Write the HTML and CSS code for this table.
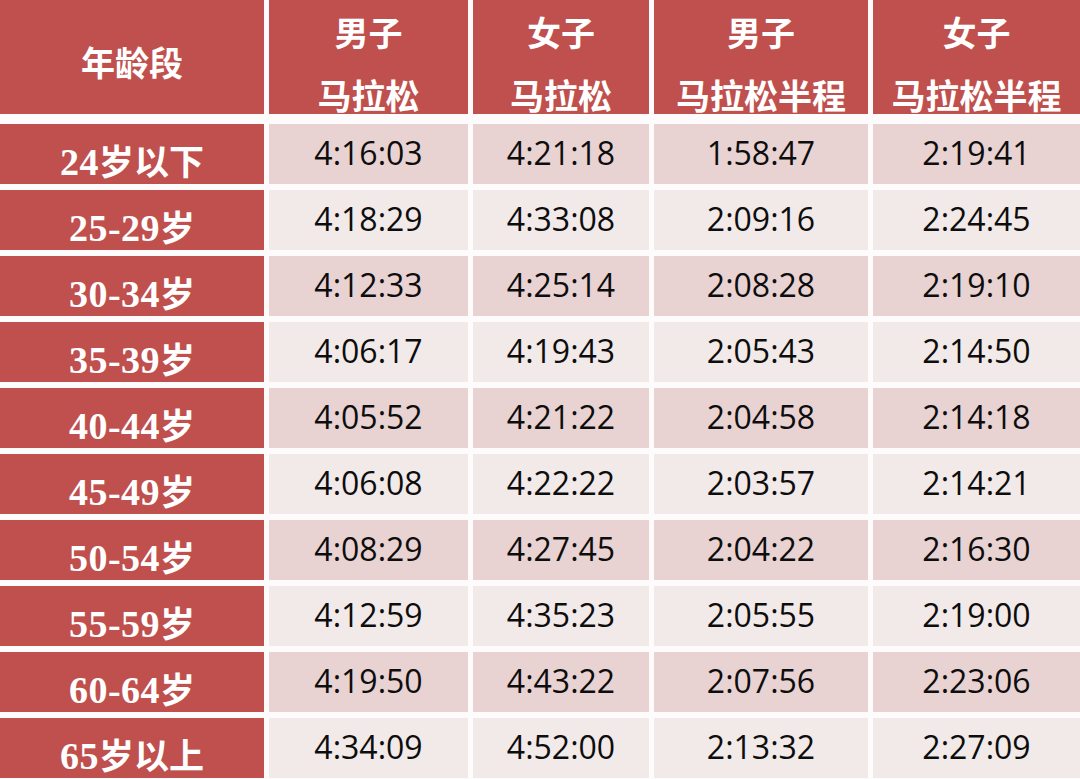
FILE: index.html
```html
<!DOCTYPE html>
<html lang="zh-CN">
<head>
<meta charset="utf-8">
<title>马拉松年龄段平均成绩</title>
<link rel="stylesheet" href="styles.css">
</head>
<body>
<div class="table">
  <div class="hd hd-age"><span>年龄段</span></div>
  <div class="hd"><span>男子</span><span>马拉松</span></div>
  <div class="hd"><span>女子</span><span>马拉松</span></div>
  <div class="hd"><span>男子</span><span>马拉松半程</span></div>
  <div class="hd"><span>女子</span><span>马拉松半程</span></div>

  <div class="age"><span class="num">24</span>岁以下</div><div class="c dark">4:16:03</div><div class="c dark">4:21:18</div><div class="c dark">1:58:47</div><div class="c dark">2:19:41</div>
  <div class="age"><span class="num">25-29</span>岁</div><div class="c light">4:18:29</div><div class="c light">4:33:08</div><div class="c light">2:09:16</div><div class="c light">2:24:45</div>
  <div class="age"><span class="num">30-34</span>岁</div><div class="c dark">4:12:33</div><div class="c dark">4:25:14</div><div class="c dark">2:08:28</div><div class="c dark">2:19:10</div>
  <div class="age"><span class="num">35-39</span>岁</div><div class="c light">4:06:17</div><div class="c light">4:19:43</div><div class="c light">2:05:43</div><div class="c light">2:14:50</div>
  <div class="age"><span class="num">40-44</span>岁</div><div class="c dark">4:05:52</div><div class="c dark">4:21:22</div><div class="c dark">2:04:58</div><div class="c dark">2:14:18</div>
  <div class="age"><span class="num">45-49</span>岁</div><div class="c light">4:06:08</div><div class="c light">4:22:22</div><div class="c light">2:03:57</div><div class="c light">2:14:21</div>
  <div class="age"><span class="num">50-54</span>岁</div><div class="c dark">4:08:29</div><div class="c dark">4:27:45</div><div class="c dark">2:04:22</div><div class="c dark">2:16:30</div>
  <div class="age"><span class="num">55-59</span>岁</div><div class="c light">4:12:59</div><div class="c light">4:35:23</div><div class="c light">2:05:55</div><div class="c light">2:19:00</div>
  <div class="age"><span class="num">60-64</span>岁</div><div class="c dark">4:19:50</div><div class="c dark">4:43:22</div><div class="c dark">2:07:56</div><div class="c dark">2:23:06</div>
  <div class="age"><span class="num">65</span>岁以上</div><div class="c light">4:34:09</div><div class="c light">4:52:00</div><div class="c light">2:13:32</div><div class="c light">2:27:09</div>
</div>
</body>
</html>
```

FILE: styles.css
```css
html, body {
  margin: 0;
  padding: 0;
  background: #fdfbfb;
}

.table {
  width: 1080px;
  height: 779px;
  overflow: hidden;
  display: grid;
  grid-template-columns: 264px 199px 176px 214px 1fr;
  grid-template-rows: 118px repeat(10, 60px);
  column-gap: 5px;
  row-gap: 6px;
}

.hd {
  background: #c0504d;
  color: #ffffff;
  font-family: "Noto Sans CJK SC", sans-serif;
  font-weight: 700;
  font-size: 34px;
  line-height: 63px;
  display: flex;
  flex-direction: column;
  align-items: center;
  padding-top: 0;
  box-sizing: border-box;
  height: 114px;
  overflow: visible;
}

.hd-age {
  padding-top: 30px;
}

.age {
  background: #c0504d;
  color: #ffffff;
  font-family: "Noto Sans CJK SC", sans-serif;
  font-weight: 700;
  font-size: 35px;
  display: flex;
  align-items: baseline;
  justify-content: center;
  padding-top: 6px;
  box-sizing: border-box;
  line-height: 60px;
}

.age .num {
  font-family: "Liberation Serif", serif;
  font-size: 38px;
  font-weight: 700;
  letter-spacing: 0.5px;
}

.c {
  font-family: "Open Sans", "Noto Sans", sans-serif;
  font-size: 32px;
  color: #0d0d0d;
  display: flex;
  align-items: center;
  justify-content: center;
  padding-bottom: 3px;
  box-sizing: border-box;
}

.dark {
  background: #e8d2d2;
}

.light {
  background: #f2e9e9;
}
```
